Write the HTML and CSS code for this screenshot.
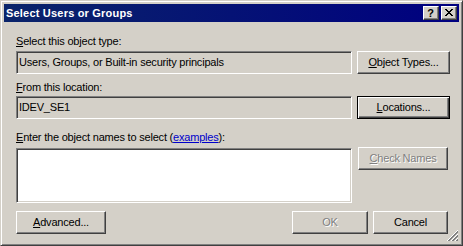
FILE: index.html
```html
<!DOCTYPE html>
<html>
<head>
<meta charset="utf-8">
<link rel="stylesheet" href="styles.css">
</head>
<body>
<div class="window">
  <div class="titlebar">
    <span class="title">Select Users or Groups</span>
    <div class="tbtns">
      <div class="tb help">?</div>
      <div class="tb close">
        <svg width="8" height="7" viewBox="0 0 8 7" shape-rendering="crispEdges">
          <path d="M0 0h2v1H0zM6 0h2v1H6zM1 1h2v1H1zM5 1h2v1H5zM2 2h4v1H2zM3 3h2v1H3zM2 4h4v1H2zM1 5h2v1H1zM5 5h2v1H5zM0 6h2v1H0zM6 6h2v1H6z" fill="#000"/>
        </svg>
      </div>
    </div>
  </div>
  <div class="client">
    <div class="label l1"><u>S</u>elect this object type:</div>
    <div class="row r1">
      <div class="field">Users, Groups, or Built-in security principals</div>
      <div class="btn wide"><u>O</u>bject Types...</div>
    </div>
    <div class="label l2"><u>F</u>rom this location:</div>
    <div class="row r2">
      <div class="field">IDEV_SE1</div>
      <div class="btn wide default"><u>L</u>ocations...</div>
    </div>
    <div class="label l3"><u>E</u>nter the object names to select (<span class="link">examples</span>):</div>
    <div class="row r3">
      <div class="textarea"></div>
      <div class="btn check disabled"><u>C</u>heck Names</div>
    </div>
    <div class="row r4">
      <div class="btn adv"><u>A</u>dvanced...</div>
      <div class="spacer"></div>
      <div class="btn ok disabled">OK</div>
      <div class="btn cancel">Cancel</div>
    </div>
  </div>
  <svg class="grip" width="12" height="12" viewBox="0 0 12 12" shape-rendering="crispEdges">
    <path d="M11 0L0 11M11 4L4 11M11 8L8 11" stroke="#fff" stroke-width="1"/>
    <path d="M11 1L1 11M11 2L2 11M11 5L5 11M11 6L6 11M11 9L9 11M11 10L10 11" stroke="#808080" stroke-width="1"/>
  </svg>
</div>
</body>
</html>
```

FILE: styles.css
```css
html, body {
  margin: 0;
  padding: 0;
  background: #d4d0c8;
}

body {
  font-family: "Liberation Sans", Arial, sans-serif;
  font-size: 11px;
  letter-spacing: -0.2px;
  color: #000;
}

.window {
  position: relative;
  box-sizing: border-box;
  width: 463px;
  height: 246px;
  background: #d4d0c8;
  border: 1px solid;
  border-color: #d4d0c8 #404040 #404040 #d4d0c8;
  box-shadow: inset 1px 1px #fff, inset -1px -1px #808080;
  padding: 3px;
}

.titlebar {
  height: 18px;
  background: linear-gradient(to right, #0a246a, #000080);
  display: flex;
  align-items: center;
  justify-content: space-between;
  padding: 0 2px 0 2px;
}

.title {
  color: #fff;
  font-weight: bold;
  font-size: 11px;
  letter-spacing: 0.2px;
  line-height: 13px;
}

.tbtns {
  display: flex;
  gap: 2px;
}

.tb {
  box-sizing: border-box;
  width: 16px;
  height: 14px;
  background: #d4d0c8;
  border: 1px solid;
  border-color: #fff #404040 #404040 #fff;
  box-shadow: inset -1px -1px #808080;
  display: flex;
  align-items: center;
  justify-content: center;
  font-weight: bold;
  font-size: 11px;
  letter-spacing: 0;
  line-height: 12px;
}

.tb.help {
  padding-right: 1px;
}

.tb.close svg {
  display: block;
  margin-left: -1px;
  margin-top: -1px;
}

.client {
  padding: 0 0 0 12px;
  display: flex;
  flex-direction: column;
}

.label {
  line-height: 13px;
  height: 13px;
  white-space: nowrap;
}

.l1 { margin-top: 13px; }
.l2 { margin-top: 7px; }
.l3 { margin-top: 12px; }

.r1 { margin-top: 3px; }
.r2 { margin-top: 2px; }
.r3 { margin-top: 4px; }
.r4 { margin-top: 8px; }

.row {
  display: flex;
  align-items: flex-start;
}

.field {
  box-sizing: border-box;
  width: 336px;
  height: 23px;
  background: #d4d0c8;
  border: 1px solid;
  border-color: #808080 #fff #fff #808080;
  box-shadow: inset 1px 1px #404040, inset -1px -1px #d4d0c8;
  padding: 0 0 0 2px;
  line-height: 20px;
  white-space: nowrap;
}

.textarea {
  box-sizing: border-box;
  width: 336px;
  height: 55px;
  background: #fff;
  border: 1px solid;
  border-color: #808080 #fff #fff #808080;
  box-shadow: inset 1px 1px #404040, inset -1px -1px #d4d0c8;
}

.btn {
  box-sizing: border-box;
  height: 23px;
  background: #d4d0c8;
  border: 1px solid;
  border-color: #fff #404040 #404040 #fff;
  box-shadow: inset -1px -1px #808080;
  display: flex;
  align-items: center;
  justify-content: center;
  line-height: 13px;
  white-space: nowrap;
}

.btn.default {
  border-color: #000;
  box-shadow: inset 1px 1px #fff, inset -1px -1px #404040, inset -2px -2px #808080;
}

.btn.disabled {
  color: #808080;
  text-shadow: 1px 1px #fff;
}

.wide {
  width: 93px;
  margin-left: 5px;
}

.check {
  width: 90px;
  margin-left: 6px;
  margin-top: -1px;
}

.adv {
  width: 90px;
}

.spacer {
  flex: 0 0 186px;
}

.ok {
  width: 76px;
}

.cancel {
  width: 75px;
  margin-left: 5px;
}

.link {
  color: #0000cc;
  text-decoration: underline;
}

.grip {
  position: absolute;
  right: 3px;
  bottom: 3px;
}
```
